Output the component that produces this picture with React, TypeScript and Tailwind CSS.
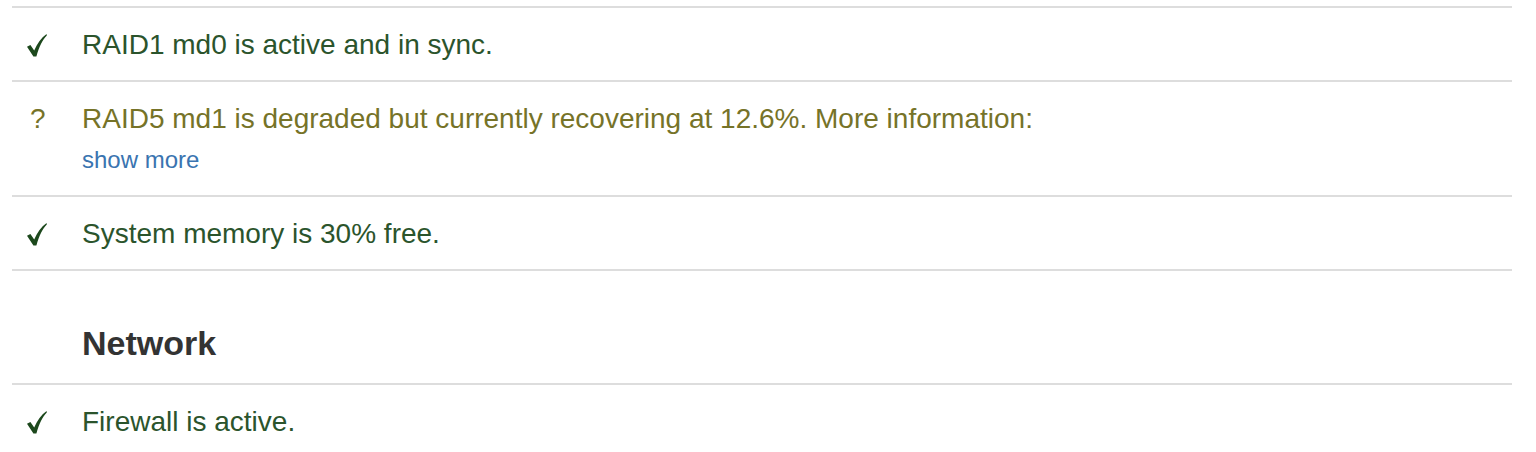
import React from "react";

const GREEN = "text-[#2b542c]";

function Check() {
  return (
    <svg width="20" height="23" viewBox="0 0 20 23" className="mt-[9px]">
      <path
        d="M0 12.8 L3.4 11 L7.2 16.6 C10 10 14 4 19.6 0 L19.8 1.6 C15.5 6 12 13 9.4 22.5 L6.4 22.5 Z"
        fill="#1c481c"
      />
    </svg>
  );
}

function Row({
  icon,
  children,
}: {
  icon: React.ReactNode;
  children: React.ReactNode;
}) {
  return (
    <div className="flex border-t-2 border-[#dddddd] pt-[17px] pb-[15px]">
      <div className="w-[54px] pl-[15px] shrink-0">{icon}</div>
      <div className="pl-4 flex-1">{children}</div>
    </div>
  );
}

export default function App() {
  return (
    <div
      className="bg-white w-[1536px] h-[452px] overflow-hidden pt-[6px] px-3"
      style={{ fontFamily: '"Liberation Sans", Arial, sans-serif' }}
    >
      <div className="w-[1500px] text-[28px] leading-[40px]">
        <Row icon={<Check />}>
          <div className={GREEN}>RAID1 md0 is active and in sync.</div>
        </Row>
        <Row
          icon={
            <span className="text-[#767328] text-[28px] leading-[40px] pl-[3px]">?</span>
          }
        >
          <div className="text-[#767328]">
            RAID5 md1 is degraded but currently recovering at 12.6%. More
            information:
          </div>
          <div className="text-[24px] leading-[40px] text-[#3a74b0] pt-[1px]">show more</div>
        </Row>
        <Row icon={<Check />}>
          <div className={GREEN}>System memory is 30% free.</div>
        </Row>
        <div className="flex border-t-2 border-[#dddddd] pt-[52px] pb-[20px]">
          <div className="w-[54px] shrink-0" />
          <div className="pl-4 text-[34px] leading-[40px] font-bold text-[#333333]">
            Network
          </div>
        </div>
        <Row icon={<Check />}>
          <div className={GREEN}>Firewall is active.</div>
        </Row>
      </div>
    </div>
  );
}
